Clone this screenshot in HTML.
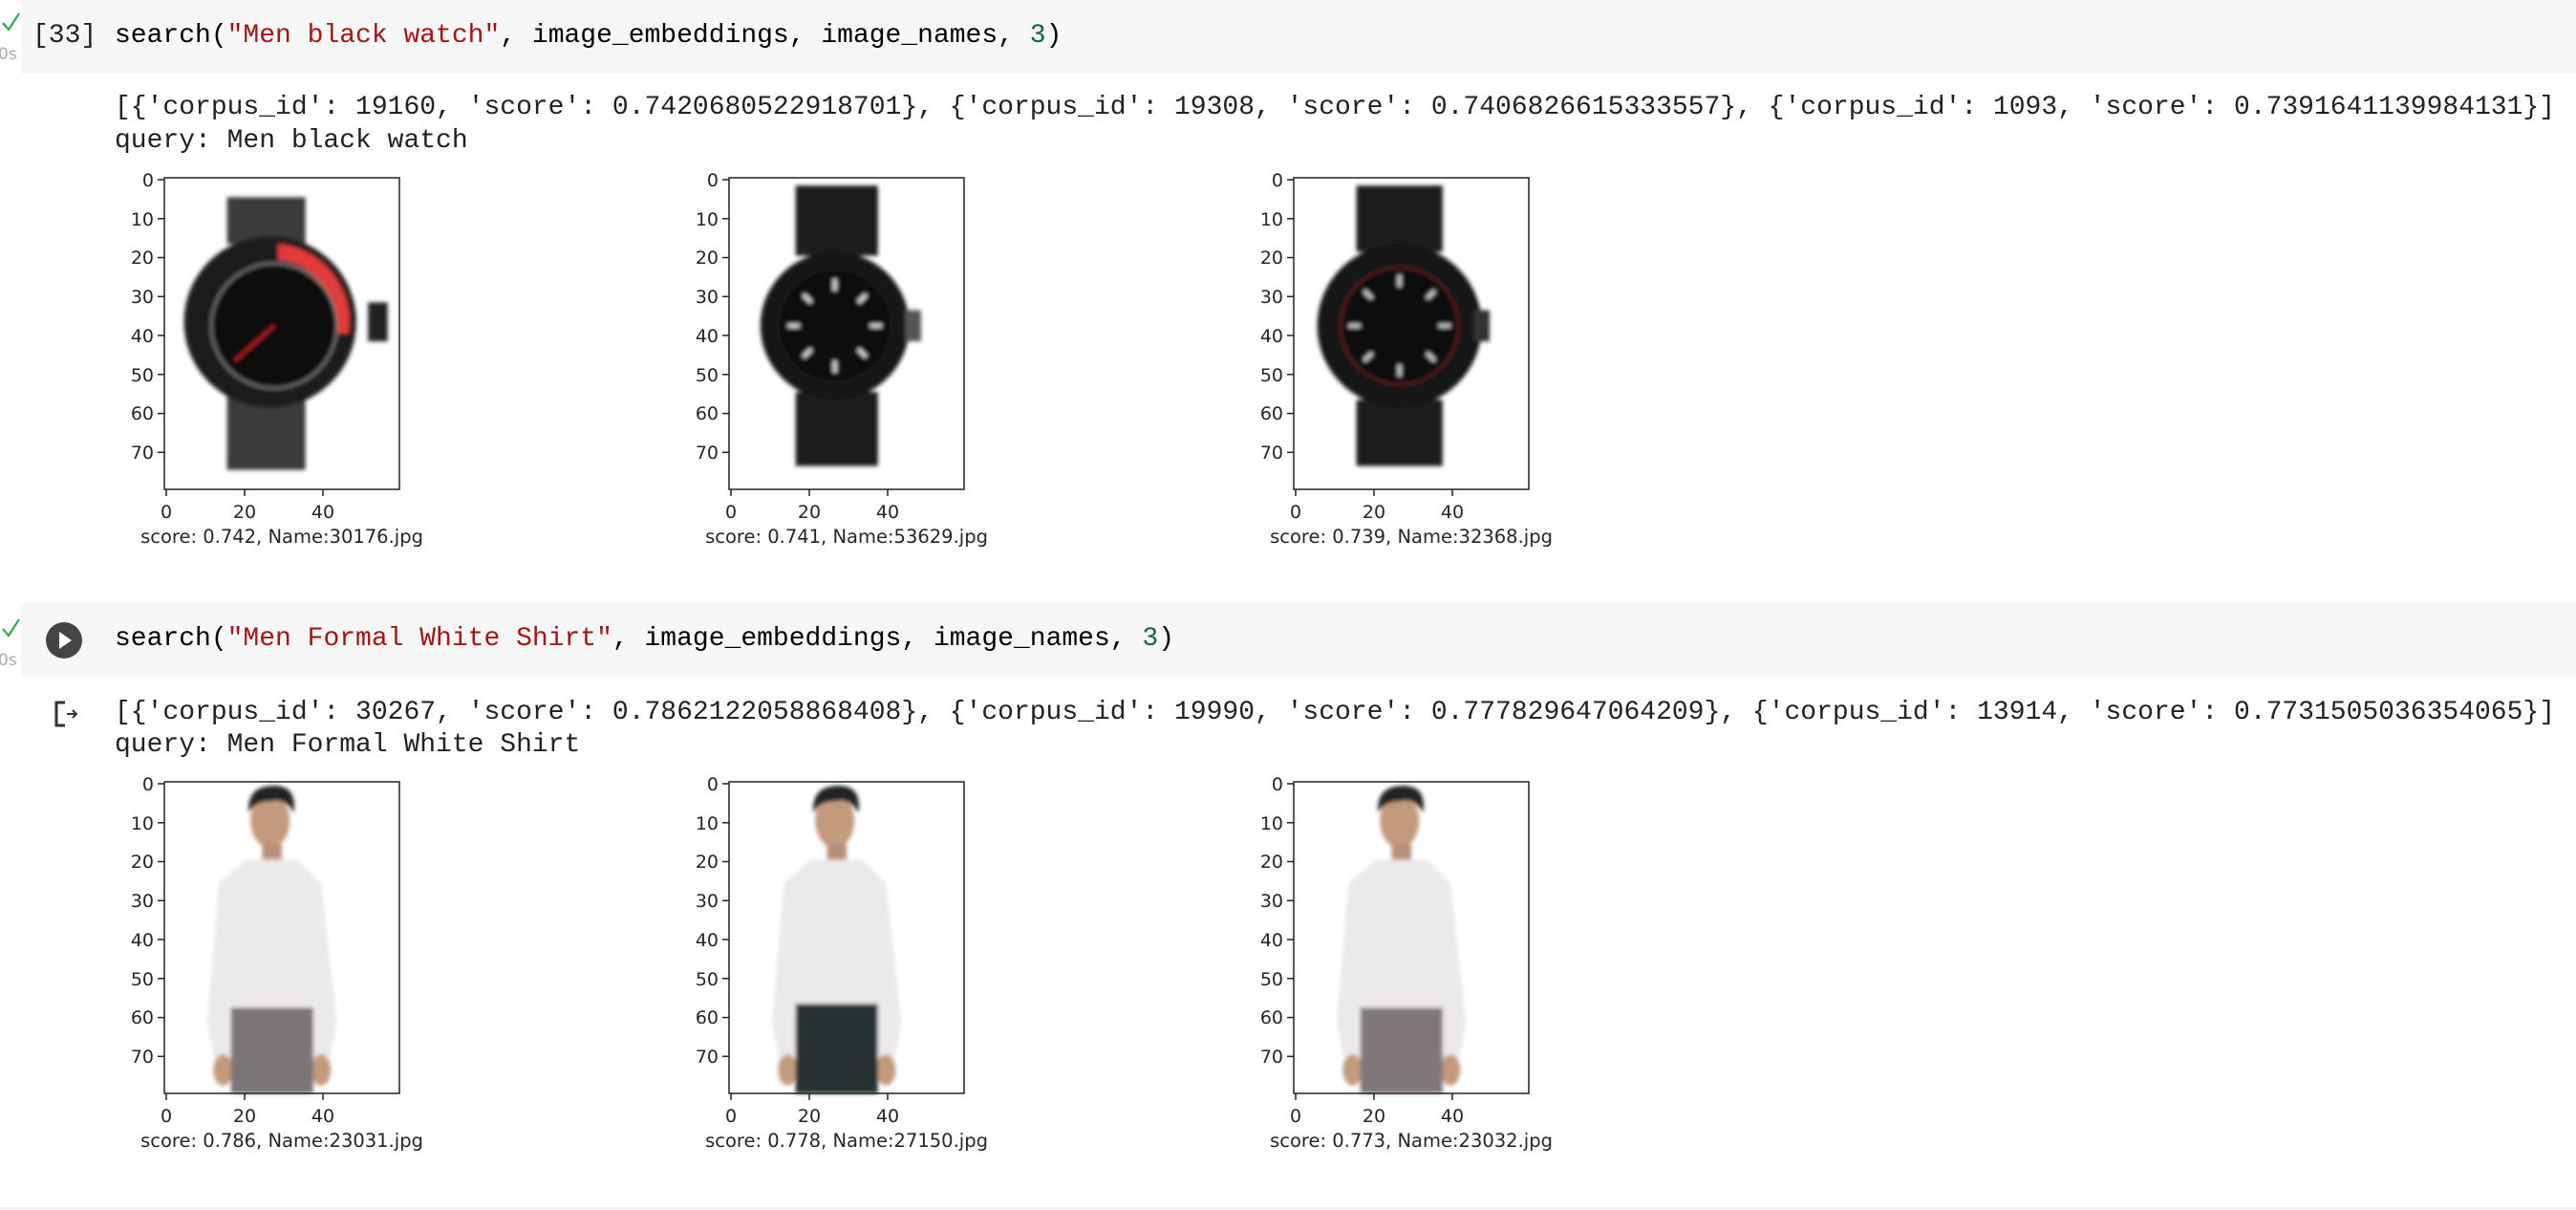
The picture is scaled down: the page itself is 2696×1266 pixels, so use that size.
<!DOCTYPE html>
<html><head><meta charset="utf-8"><style>
body{margin:0;width:2696px;height:1266px;background:#fff;position:relative;overflow:hidden;font-family:"Liberation Mono",monospace}
.hdr{position:absolute;left:22px;right:0;background:#f7f7f7}
.code{position:absolute;left:120px;font-size:28px;color:#000;white-space:pre;line-height:1}
.out{position:absolute;left:120px;font-size:28px;color:#212121;white-space:pre;line-height:1}
.s{color:#a31515}.n{color:#116644}
.plot{position:absolute}
svg text{font-family:"DejaVu Sans","Liberation Sans",sans-serif;fill:#262626}
</style></head><body>
<div class="hdr" style="top:0;height:77px"></div>
<svg style="position:absolute;left:0;top:6px" width="30" height="60"><path d="M3 18 L9 25 L20 8" stroke="#34a853" stroke-width="2.2" fill="none"/><text x="-2" y="56" font-size="17" style="fill:#aaa">0s</text></svg>
<div class="code" style="left:34px;top:24px;color:#222">[33]</div>
<div class="code" style="top:24px">search(<span class="s">"Men black watch"</span>, image_embeddings, image_names, <span class="n">3</span>)</div>
<div class="out" style="top:99px">[{'corpus_id': 19160, 'score': 0.7420680522918701}, {'corpus_id': 19308, 'score': 0.7406826615333557}, {'corpus_id': 1093, 'score': 0.7391641139984131}]</div>
<div class="out" style="top:134px">query: Men black watch</div>

<div class="hdr" style="top:631px;height:77px"></div>
<svg style="position:absolute;left:0;top:640px" width="30" height="60"><path d="M3 18 L9 25 L20 8" stroke="#34a853" stroke-width="2.2" fill="none"/><text x="-2" y="56" font-size="17" style="fill:#aaa">0s</text></svg>
<svg style="position:absolute;left:47px;top:650px" width="40" height="40"><circle cx="20" cy="20" r="19" fill="#444"/><path d="M15 11 L28 20 L15 29Z" fill="#fff"/></svg>
<div class="code" style="top:655px">search(<span class="s">"Men Formal White Shirt"</span>, image_embeddings, image_names, <span class="n">3</span>)</div>
<svg style="position:absolute;left:56px;top:732px" width="30" height="30"><path d="M12 3 H3 V27 H12" stroke="#333" stroke-width="3" fill="none"/><path d="M14 15 H24 M20 11 L24 15 L20 19" stroke="#333" stroke-width="2" fill="none"/></svg>
<div class="out" style="top:732px">[{'corpus_id': 30267, 'score': 0.7862122058868408}, {'corpus_id': 19990, 'score': 0.777829647064209}, {'corpus_id': 13914, 'score': 0.7731505036354065}]</div>
<div class="out" style="top:766px">query: Men Formal White Shirt</div>
<div style="position:absolute;left:0;right:0;top:1263px;height:2px;background:#eee"></div>

<svg width="0" height="0" style="position:absolute"><defs>
<filter id="bl"><feGaussianBlur stdDeviation="0.5"/></filter>
<g id="axes">
<rect x="0" y="0" width="246" height="326" fill="none" stroke="#222" stroke-width="1.5"/>
<g stroke="#222" stroke-width="1.5">
<line x1="-7" y1="2" x2="0" y2="2"/><line x1="-7" y1="42.8" x2="0" y2="42.8"/><line x1="-7" y1="83.5" x2="0" y2="83.5"/><line x1="-7" y1="124.3" x2="0" y2="124.3"/><line x1="-7" y1="165" x2="0" y2="165"/><line x1="-7" y1="205.8" x2="0" y2="205.8"/><line x1="-7" y1="246.6" x2="0" y2="246.6"/><line x1="-7" y1="287.3" x2="0" y2="287.3"/>
<line x1="2" y1="326" x2="2" y2="333"/><line x1="84" y1="326" x2="84" y2="333"/><line x1="166" y1="326" x2="166" y2="333"/>
</g>
<g font-size="19" text-anchor="end">
<text x="-11" y="9">0</text><text x="-11" y="50">10</text><text x="-11" y="90">20</text><text x="-11" y="131">30</text><text x="-11" y="172">40</text><text x="-11" y="213">50</text><text x="-11" y="253">60</text><text x="-11" y="294">70</text>
</g>
<g font-size="19" text-anchor="middle">
<text x="2" y="356">0</text><text x="84" y="356">20</text><text x="166" y="356">40</text>
</g>
</g>
<g id="man">
<path d="M14 26 L21 20 L34 20 L40 26 L44 62 L42 72 L38 72 L37 58 L18 58 L17 72 L13 72 L11 62Z" fill="#ece9ea"/>
<ellipse cx="27" cy="10" rx="5" ry="7" fill="#c49a7c"/>
<path d="M21.5 8 Q21 1 28 1 Q34 1 33 8 Q31 4 27 5 Q23 5 21.5 8Z" fill="#222"/>
<rect x="25" y="16" width="5" height="4" fill="#b89078"/>
<ellipse cx="15" cy="74" rx="2.5" ry="4" fill="#c49a7c"/><ellipse cx="40" cy="74" rx="2.5" ry="4" fill="#c49a7c"/>
</g>
</defs></svg>

<!-- row 1 -->
<svg class="plot" style="left:102px;top:166px" width="380" height="440"><g transform="translate(70,20)">
<g transform="scale(4.1,4.075)" filter="url(#bl)">
<rect x="16" y="5" width="20" height="12" fill="#3b3b3b"/><rect x="16" y="56" width="20" height="19" fill="#3b3b3b"/>
<circle cx="27" cy="37" r="22" fill="#1c1c1c"/><rect x="52" y="32" width="5" height="10" fill="#222"/>
<path d="M29 17 A20 20 0 0 1 47 40 L43 40 A16 16 0 0 0 29 21Z" fill="#e23a3a"/>
<circle cx="28" cy="38" r="16" fill="#111" stroke="#777" stroke-width="0.6"/>
<line x1="28" y1="38" x2="18" y2="47" stroke="#c22" stroke-width="0.6"/>
</g>
<use href="#axes"/><text x="123" y="382" font-size="19.5" text-anchor="middle">score: 0.742, Name:30176.jpg</text></g></svg>

<svg class="plot" style="left:693px;top:166px" width="380" height="440"><g transform="translate(70,20)">
<g transform="scale(4.1,4.075)" filter="url(#bl)">
<rect x="17" y="2" width="21" height="18" fill="#1e1e1e"/><rect x="17" y="55" width="21" height="19" fill="#1e1e1e"/>
<circle cx="27" cy="38" r="19" fill="#181818"/><rect x="45" y="34" width="4" height="8" fill="#555"/>
<circle cx="27" cy="38" r="14" fill="#0d0d0d"/>
<g stroke="#ddd" stroke-width="1"><line x1="27" y1="26" x2="27" y2="29"/><line x1="27" y1="47" x2="27" y2="50"/><line x1="15" y1="38" x2="18" y2="38"/><line x1="36" y1="38" x2="39" y2="38"/><line x1="19" y1="30" x2="21" y2="32"/><line x1="33" y1="44" x2="35" y2="46"/><line x1="35" y1="30" x2="33" y2="32"/><line x1="19" y1="46" x2="21" y2="44"/></g>
</g>
<use href="#axes"/><text x="123" y="382" font-size="19.5" text-anchor="middle">score: 0.741, Name:53629.jpg</text></g></svg>

<svg class="plot" style="left:1284px;top:166px" width="380" height="440"><g transform="translate(70,20)">
<g transform="scale(4.1,4.075)" filter="url(#bl)">
<rect x="16" y="2" width="22" height="17" fill="#1a1a1a"/><rect x="16" y="57" width="22" height="17" fill="#1a1a1a"/>
<circle cx="27" cy="38" r="21" fill="#161616"/><rect x="46" y="34" width="4" height="8" fill="#333"/>
<circle cx="27" cy="38" r="15" fill="#0c0c0c" stroke="#622" stroke-width="0.5"/>
<g stroke="#ccc" stroke-width="1"><line x1="27" y1="25" x2="27" y2="28"/><line x1="27" y1="48" x2="27" y2="51"/><line x1="14" y1="38" x2="17" y2="38"/><line x1="37" y1="38" x2="40" y2="38"/><line x1="18" y1="29" x2="20" y2="31"/><line x1="34" y1="45" x2="36" y2="47"/><line x1="36" y1="29" x2="34" y2="31"/><line x1="18" y1="47" x2="20" y2="45"/></g>
</g>
<use href="#axes"/><text x="123" y="382" font-size="19.5" text-anchor="middle">score: 0.739, Name:32368.jpg</text></g></svg>

<!-- row 2 -->
<svg class="plot" style="left:102px;top:798px" width="380" height="440"><g transform="translate(70,20)">
<g transform="scale(4.1,4.075)" filter="url(#bl)"><use href="#man"/><rect x="17" y="58" width="21" height="22" fill="#7b7575"/></g>
<use href="#axes"/><text x="123" y="382" font-size="19.5" text-anchor="middle">score: 0.786, Name:23031.jpg</text></g></svg>

<svg class="plot" style="left:693px;top:798px" width="380" height="440"><g transform="translate(70,20)">
<g transform="scale(4.1,4.075)" filter="url(#bl)"><use href="#man"/><rect x="17" y="57" width="21" height="23" fill="#283030"/></g>
<use href="#axes"/><text x="123" y="382" font-size="19.5" text-anchor="middle">score: 0.778, Name:27150.jpg</text></g></svg>

<svg class="plot" style="left:1284px;top:798px" width="380" height="440"><g transform="translate(70,20)">
<g transform="scale(4.1,4.075)" filter="url(#bl)"><use href="#man"/><rect x="17" y="58" width="21" height="22" fill="#807878"/></g>
<use href="#axes"/><text x="123" y="382" font-size="19.5" text-anchor="middle">score: 0.773, Name:23032.jpg</text></g></svg>
</body></html>
